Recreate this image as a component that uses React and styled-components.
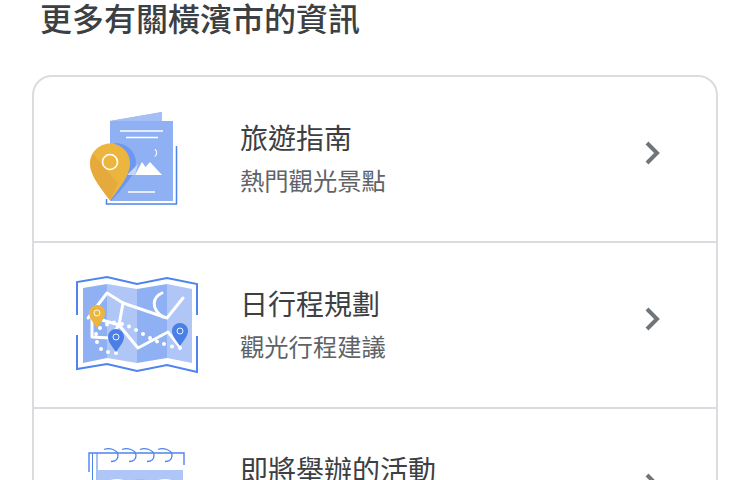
import React from 'react';
import styled, { createGlobalStyle } from 'styled-components';

const GlobalStyle = createGlobalStyle`
	html, body {
		margin: 0;
		padding: 0;
		background: #fff;
		overflow: hidden;
		height: 480px;
	}
	body {
		font-family: Roboto, "Noto Sans CJK TC", sans-serif;
	}
`;

const GuideIcon = () => (
	<svg width="140" height="120" viewBox="0 0 140 120">
		<polyline points="46.5,100 46.5,105 116.5,105 116.5,47" fill="none" stroke="#4f84ee" strokeWidth="1.5" />
		<polygon points="50,22 102,13 102,22 113,22 113,102 50,102" fill="#8fb0f3" />
		<polygon points="102,13 102,22 50,22" fill="#a5bff6" />
		<path d="M60 32h43M66 38.5h32M68 93h27" stroke="#fff" strokeWidth="1.5" fill="none" />
		<path d="M55 44c12 0 21 9 21 20 0 10-10 22-25 38z" fill="#6e97f2" />
		<polygon points="75,76 82,63 85.5,68 90,63 102,76" fill="#fff" />
		<polygon points="67,76 78,65 75,76" fill="#c6d6fa" />
		<path d="M95 50a5 5 0 0 1 0 7.5a5.5 5.5 0 0 0 0-7.5z" fill="#fff" stroke="#fff" strokeWidth="0.8" />
		<path d="M50 44.5c-11 0-20 9-20 20 0 10 7 20 20 37 13-17 20-27 20-37 0-11-9-20-20-20z" fill="#ecb63e" />
		<path d="M50 101.5c-13-17-20-27-20-37 0-4 1-7 3-10l25 30c-2 4-5 10-8 17z" fill="#e3a23c" opacity="0.6" />
		<circle cx="50" cy="63" r="7.5" fill="none" stroke="#fff" strokeWidth="1.6" />
	</svg>
);

const Pin = ({ x, y, color }) => (
	<g transform={`translate(${x} ${y})`}>
		<path d="M0 22C-5 15-8 11-8 7a8 8 0 0 1 16 0c0 4-3 8-8 15z" fill={color} />
		<circle cx="0" cy="7" r="3" fill="none" stroke="#fff" strokeWidth="0.9" />
	</g>
);

const mapDots = [
	[40, 63], [47, 59.5], [54, 57.5], [62, 59], [69, 61.5], [76, 65], [83, 69], [90, 73],
	[97, 76.5], [104, 79], [112, 81.5], [120, 83], [36, 69], [37, 77], [41, 84], [48, 87], [56, 88],
];

const MapIcon = () => (
	<svg width="150" height="120" viewBox="0 0 150 120">
		<polygon points="23,23 47,19 47,93 23,98" fill="#8fb0f3" />
		<polygon points="47,19 77,24 77,98 47,93" fill="#afc6f7" />
		<polygon points="77,24 107,19 107,93 77,98" fill="#8fb0f3" />
		<polygon points="107,19 132,24 132,98 107,93" fill="#afc6f7" />
		<polyline points="17,50 17,17 47,12 77,19 107,13 137,19 137,50" fill="none" stroke="#4f84ee" strokeWidth="2" />
		<polyline points="17,70 17,104 47,99 77,106 107,100 137,107 137,71" fill="none" stroke="#4f84ee" strokeWidth="2" />
		<g fill="none" stroke="#fff" strokeWidth="3" strokeLinecap="round" strokeLinejoin="round">
			<polyline points="28,53 47,28 63,38 107,53 123,33" />
			<polyline points="63,38 59,60 32,52 32,72 50,73 59,60 78,83 108,67 120,82" />
			<path d="M102 28c-9 4-12 15 1 24" />
		</g>
		<g fill="#fff">
			{mapDots.map(([cx, cy]) => (
				<circle key={`${cx}-${cy}`} cx={cx} cy={cy} r="2" />
			))}
		</g>
		<Pin x={37} y={41} color="#ecb63e" />
		<Pin x={56} y={65} color="#4a7fe6" />
		<Pin x={120} y={59} color="#4a7fe6" />
	</svg>
);

const EventIcon = () => (
	<svg width="150" height="50" viewBox="0 0 150 50">
		<polyline points="29,41 29,22 124,22 124,34" fill="none" stroke="#4f84ee" strokeWidth="1.4" />
		<path d="M32.5 50V22M37 50V22" stroke="#4f84ee" strokeWidth="1" fill="none" />
		<rect x="38" y="39" width="85" height="11" fill="#afc6f7" />
		<g fill="none" stroke="#4f84ee" strokeWidth="1.3">
			{[44, 62, 80, 98].map(x => (
				<path key={x} d={`M${x} 18.5c5-2 14 0 14 6 0 4-3 6-7 6`} />
			))}
		</g>
		<g fill="#fff">
			<ellipse cx="57" cy="50" rx="7" ry="2" />
			<ellipse cx="105" cy="50" rx="7" ry="2" />
		</g>
		<ellipse cx="80" cy="50" rx="7" ry="2" fill="#ecb63e" />
	</svg>
);

const Chevron = () => (
	<svg width="24" height="30" viewBox="0 0 24 30">
		<polyline points="5,5 15,15 5,25" fill="none" stroke="#70757a" strokeWidth="4" />
	</svg>
);

const items = [
	{ title: '旅遊指南', sub: '熱門觀光景點', icon: <GuideIcon /> },
	{ title: '日行程規劃', sub: '觀光行程建議', icon: <MapIcon /> },
	{ title: '即將舉辦的活動', sub: '', icon: <EventIcon /> },
];

export default function App() {
	return (
		<Page>
			<GlobalStyle />
			<Heading>更多有關橫濱市的資訊</Heading>
			<Card>
				{items.map((item, i) => (
					<Row key={item.title} $last={i === items.length - 1}>
						<IconSlot>{item.icon}</IconSlot>
						<Texts>
							<Title>{item.title}</Title>
							{item.sub && <Sub>{item.sub}</Sub>}
						</Texts>
						<ChevronSlot>
							<Chevron />
						</ChevronSlot>
					</Row>
				))}
			</Card>
		</Page>
	);
}

const Page = styled.div`
	width: 750px;
	height: 480px;
	overflow: hidden;
	padding: 0 32px;
	box-sizing: border-box;
`;

const Heading = styled.h1`
	margin: 0 0 0 8px;
	height: 75px;
	padding-top: 1px;
	box-sizing: border-box;
	font-size: 32px;
	line-height: 38px;
	font-weight: 500;
	color: #3c4043;
`;

const Card = styled.div`
	width: 686px;
	box-sizing: border-box;
	border: 2px solid #dadce0;
	border-radius: 20px;
`;

const Row = styled.div`
	height: 164px;
	display: flex;
	align-items: flex-start;
	border-bottom: ${p => (p.$last ? 'none' : '2px solid #dadce0')};
`;

const IconSlot = styled.div`
	width: 206px;
	padding: 22px 0 0 26px;
	box-sizing: border-box;
	flex-shrink: 0;
	svg {
		display: block;
	}
`;

const Texts = styled.div`
	flex: 1;
	min-width: 0;
	padding-top: 45px;
`;

const Title = styled.div`
	font-size: 28px;
	line-height: 36px;
	color: #3c4043;
`;

const Sub = styled.div`
	font-size: 24.3px;
	line-height: 32px;
	margin-top: 8px;
	color: #5f6368;
`;

const ChevronSlot = styled.div`
	width: 79px;
	padding: 61px 0 0 5px;
	box-sizing: border-box;
	flex-shrink: 0;
	svg {
		display: block;
	}
`;
